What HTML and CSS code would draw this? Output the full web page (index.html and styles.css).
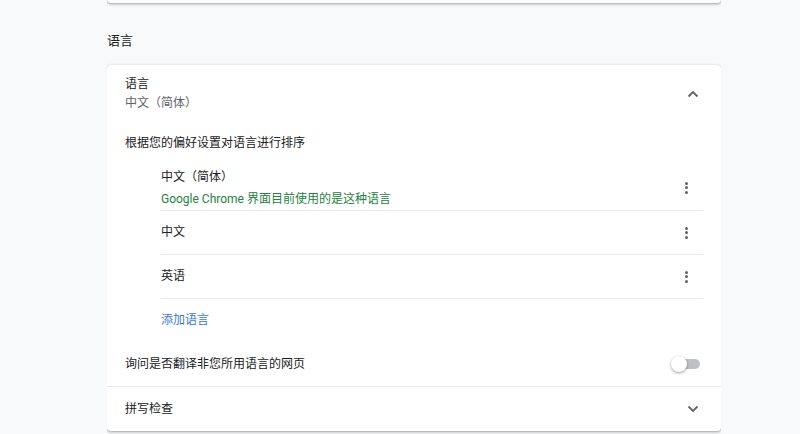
FILE: index.html
```html
<!DOCTYPE html>
<html lang="zh-CN">
<head>
<meta charset="utf-8">
<link rel="stylesheet" href="styles.css">
</head>
<body>
<div class="page">
  <div class="card card-top"></div>
  <h2 class="section-title">语言</h2>
  <div class="card">
    <div class="row row-expand">
      <div class="row-text">
        <div class="primary">语言</div>
        <div class="secondary">中文（简体）</div>
      </div>
      <span class="chev">
        <svg width="12" height="8" viewBox="0 0 12 8"><path d="M1.5 6.5 L6 2 L10.5 6.5" fill="none" stroke="#5f6368" stroke-width="1.8"/></svg>
      </span>
    </div>
    <div class="row-sub">根据您的偏好设置对语言进行排序</div>
    <div class="lang-list">
      <div class="lang-item lang-item-two">
        <div class="row-text">
          <div class="primary">中文（简体）</div>
          <div class="green">Google Chrome 界面目前使用的是这种语言</div>
        </div>
        <span class="kebab"><i></i><i></i><i></i></span>
      </div>
      <div class="lang-item">
        <div class="primary">中文</div>
        <span class="kebab"><i></i><i></i><i></i></span>
      </div>
      <div class="lang-item">
        <div class="primary">英语</div>
        <span class="kebab"><i></i><i></i><i></i></span>
      </div>
      <div class="add-lang">添加语言</div>
    </div>
    <div class="row row-toggle">
      <div class="primary">询问是否翻译非您所用语言的网页</div>
      <span class="toggle"><span class="track"></span><span class="knob"></span></span>
    </div>
    <div class="row row-spell">
      <div class="primary">拼写检查</div>
      <span class="chev">
        <svg width="12" height="8" viewBox="0 0 12 8"><path d="M1.5 1.5 L6 6 L10.5 1.5" fill="none" stroke="#5f6368" stroke-width="1.8"/></svg>
      </span>
    </div>
  </div>
</div>
</body>
</html>
```

FILE: styles.css
```css
html, body {
  margin: 0;
  padding: 0;
  background: #f8f9fa;
  font-family: Roboto, "Noto Sans CJK SC", sans-serif;
  font-size: 12px;
  color: #202124;
}
.page {
  width: 614px;
  margin-left: 107px;
  overflow: hidden;
  height: 434px;
}
.card {
  background: #fff;
  border-radius: 4px;
  box-shadow: 0 1px 2px 0 rgba(60,64,67,.3), 0 1px 3px 1px rgba(60,64,67,.15);
}
.card-top {
  height: 23px;
  margin-top: -20px;
}
.section-title {
  margin: 28px 0 14px 0;
  font-size: 13px;
  font-weight: 400;
  line-height: 20px;
  color: #202124;
}
.row {
  display: flex;
  align-items: center;
  justify-content: space-between;
  padding: 0 0 0 18px;
}
.row-expand {
  height: 57px;
  padding-right: 22px;
}
.row-text {
  display: flex;
  flex-direction: column;
}
.primary {
  line-height: 19px;
  color: #202124;
}
.secondary {
  line-height: 19px;
  color: #5f6368;
}
.chev {
  display: flex;
  align-items: center;
  justify-content: center;
  width: 12px;
  height: 12px;
}
.row-sub {
  height: 41px;
  line-height: 41px;
  padding: 1px 0 0 18px;
}
.lang-list {
  margin: 0 18px 0 54px;
}
.lang-item {
  display: flex;
  align-items: center;
  justify-content: space-between;
  height: 43px;
  border-bottom: 1px solid #e8eaed;
  padding-right: 14px;
}
.lang-item-two {
  height: 45px;
  padding-top: 1px;
}
.lang-item-two .primary,
.lang-item-two .green {
  line-height: 20px;
}
.lang-item-two .green {
  margin-top: 2px;
}
.green {
  color: #23833f;
}
.kebab {
  display: flex;
  flex-direction: column;
  gap: 1.5px;
  width: 6px;
  align-items: center;
}
.kebab i {
  display: block;
  width: 3px;
  height: 3px;
  border-radius: 50%;
  background: #5f6368;
}
.add-lang {
  height: 43px;
  line-height: 43px;
  color: #3b78e0;
}
.row-toggle {
  height: 44px;
  padding-right: 21px;
  border-bottom: 1px solid #e8eaed;
}
.toggle {
  position: relative;
  width: 29px;
  height: 16px;
  display: block;
}
.track {
  position: absolute;
  left: 3px;
  top: 3px;
  width: 26px;
  height: 10px;
  border-radius: 5px;
  background: #bdc1c6;
}
.knob {
  position: absolute;
  left: 0;
  top: 0;
  width: 16px;
  height: 16px;
  border-radius: 50%;
  background: #fff;
  box-shadow: 0 1px 3px 0 rgba(0,0,0,.4);
}
.row-spell {
  height: 44px;
  padding-right: 22px;
}
```
